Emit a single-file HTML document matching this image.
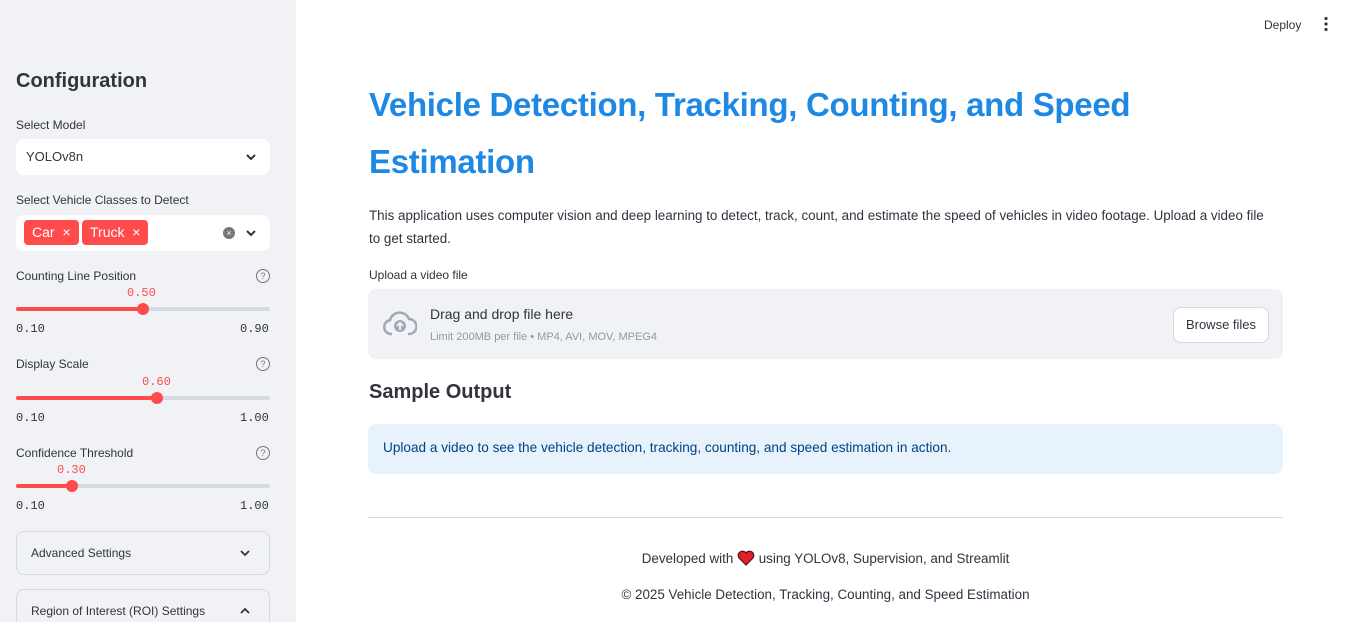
<!DOCTYPE html>
<html><head><meta charset="utf-8"><style>
*{box-sizing:border-box;margin:0;padding:0}
html,body{width:1350px;height:622px;overflow:hidden}
body{font-family:"Liberation Sans",sans-serif;color:#31333f;background:#fff;position:relative}
.sb{position:absolute;left:0;top:0;width:296px;height:622px;background:#f0f2f6;overflow:hidden}
.abs{position:absolute}
.lbl{font-size:12px;color:#31333f}
.box{background:#fff;border-radius:8px}
.mono{font-family:"Liberation Mono",monospace;font-size:12px}
.track{position:absolute;left:16px;width:254px;height:4px;border-radius:2px;background:#d6d9e0}
.fill{position:absolute;left:0;top:0;height:4px;background:#ff4b4b;border-radius:2px}
.knob{position:absolute;top:-4px;width:12px;height:12px;border-radius:50%;background:#ff4b4b}
.q{position:absolute;left:256px;width:14px;height:14px;border:1.3px solid #777;border-radius:50%;font-size:9px;text-align:center;line-height:12px;color:#777}
.tag{position:absolute;background:#ff4b4b;color:#fff;border-radius:4px;height:25px;font-size:14px;line-height:25px;padding:0 8px}
.exp{position:absolute;left:16px;width:254px;border:1px solid #d6d9e0;border-radius:8px;font-size:12px;padding-left:14px}
.chev{position:absolute}
</style></head><body>
<div class="sb">
<div class="abs" style="left:16px;top:70px;font-size:20px;font-weight:bold">Configuration</div>
<div class="abs lbl" style="left:16px;top:118px">Select Model</div>
<div class="abs box" style="left:16px;top:139px;width:254px;height:36px"><span class="abs" style="left:10px;top:10px;font-size:13px">YOLOv8n</span><svg class="chev" style="left:229px;top:13px" width="12" height="10" viewBox="0 0 12 10"><path d="M2 3l4 4 4-4" fill="none" stroke="#31333f" stroke-width="2"/></svg></div>
<div class="abs lbl" style="left:16px;top:193px">Select Vehicle Classes to Detect</div>
<div class="abs box" style="left:16px;top:215px;width:254px;height:36px">
<div class="tag" style="left:8px;top:5px">Car &nbsp;×</div>
<div class="tag" style="left:66px;top:5px">Truck &nbsp;×</div>
<div class="abs" style="left:207px;top:12px;width:12px;height:12px;border-radius:50%;background:#777;color:#fff;font-size:9px;text-align:center;line-height:12px">×</div>
<svg class="chev" style="left:229px;top:13px" width="12" height="10" viewBox="0 0 12 10"><path d="M2 3l4 4 4-4" fill="none" stroke="#31333f" stroke-width="2"/></svg></div>
<div class="abs lbl" style="left:16px;top:269px">Counting Line Position</div><div class="q" style="top:269px">?</div>
<div class="abs mono" style="left:127px;top:286px;color:#ff4b4b">0.50</div>
<div class="track" style="top:307px"><div class="fill" style="width:127px"></div><div class="knob" style="left:121px"></div></div>
<div class="abs mono" style="left:16px;top:322px">0.10</div><div class="abs mono" style="left:240px;top:322px">0.90</div>
<div class="abs lbl" style="left:16px;top:357px">Display Scale</div><div class="q" style="top:357px">?</div>
<div class="abs mono" style="left:142px;top:375px;color:#ff4b4b">0.60</div>
<div class="track" style="top:396px"><div class="fill" style="width:141px"></div><div class="knob" style="left:135px"></div></div>
<div class="abs mono" style="left:16px;top:411px">0.10</div><div class="abs mono" style="left:240px;top:411px">1.00</div>
<div class="abs lbl" style="left:16px;top:446px">Confidence Threshold</div><div class="q" style="top:446px">?</div>
<div class="abs mono" style="left:57px;top:463px;color:#ff4b4b">0.30</div>
<div class="track" style="top:484px"><div class="fill" style="width:56px"></div><div class="knob" style="left:50px"></div></div>
<div class="abs mono" style="left:16px;top:499px">0.10</div><div class="abs mono" style="left:240px;top:499px">1.00</div>
<div class="exp" style="top:531px;height:44px;line-height:42px">Advanced Settings<svg class="chev" style="left:222px;top:16px" width="12" height="10" viewBox="0 0 12 10"><path d="M2 3l4 4 4-4" fill="none" stroke="#31333f" stroke-width="1.8"/></svg></div>
<div class="exp" style="top:589px;height:50px;line-height:42px">Region of Interest (ROI) Settings<svg class="chev" style="left:222px;top:16px" width="12" height="10" viewBox="0 0 12 10"><path d="M2 7l4-4 4 4" fill="none" stroke="#31333f" stroke-width="1.8"/></svg></div>
</div>
<div class="abs" style="left:1264px;top:18px;font-size:12px">Deploy</div>
<svg class="abs" style="left:1322px;top:16px" width="8" height="16" viewBox="0 0 8 16"><circle cx="4" cy="2.5" r="1.6" fill="#31333f"/><circle cx="4" cy="8" r="1.6" fill="#31333f"/><circle cx="4" cy="13.5" r="1.6" fill="#31333f"/></svg>
<div class="abs" style="left:369px;top:76px;width:900px;font-size:33px;font-weight:bold;color:#1e88e5;line-height:57px;letter-spacing:-0.3px">Vehicle Detection, Tracking, Counting, and Speed Estimation</div>
<div class="abs" style="left:369px;top:204px;width:905px;font-size:13.4px;line-height:23px">This application uses computer vision and deep learning to detect, track, count, and estimate the speed of vehicles in video footage. Upload a video file to get started.</div>
<div class="abs lbl" style="left:369px;top:268px">Upload a video file</div>
<div class="abs" style="left:368px;top:289px;width:915px;height:70px;background:#f0f2f6;border-radius:8px">
<svg class="abs" style="left:15px;top:22px" width="34" height="26" viewBox="0 0 34 26"><path d="M9 23H8a7 7 0 0 1-1-13.9A10 10 0 0 1 26 8a7.5 7.5 0 0 1 0 15h-1" fill="none" stroke="#a3a8b8" stroke-width="2.5"/><circle cx="17" cy="15" r="6" fill="#a3a8b8"/><path d="M17 19v-7M14 15l3-3 3 3" stroke="#f0f2f6" stroke-width="1.8" fill="none"/></svg>
<div class="abs" style="left:62px;top:17px;font-size:14px">Drag and drop file here</div>
<div class="abs" style="left:62px;top:42px;font-size:11px;color:#9197a6">Limit 200MB per file • MP4, AVI, MOV, MPEG4</div>
<div class="abs" style="left:805px;top:18px;width:96px;height:36px;background:#fff;border:1px solid #d6d9e0;border-radius:8px;font-size:13px;text-align:center;line-height:34px">Browse files</div>
</div>
<div class="abs" style="left:369px;top:381px;font-size:20px;font-weight:bold">Sample Output</div>
<div class="abs" style="left:368px;top:424px;width:915px;height:50px;background:#e8f2fc;border-radius:8px;color:#004280;font-size:13.6px;padding:16px 15px">Upload a video to see the vehicle detection, tracking, counting, and speed estimation in action.</div>
<div class="abs" style="left:368px;top:517px;width:915px;height:1px;background:#d6d9e0"></div>
<div class="abs" style="left:368px;top:550px;width:915px;text-align:center;font-size:13.4px">Developed with <svg width="18" height="16" viewBox="0 0 18 16" style="vertical-align:-3px"><path d="M9 15L2 8a4 4 0 0 1 7-5 4 4 0 0 1 7 5z" fill="#e0202a" stroke="#5a1010" stroke-width="1.2"/></svg> using YOLOv8, Supervision, and Streamlit</div>
<div class="abs" style="left:368px;top:587px;width:915px;text-align:center;font-size:13.4px">© 2025 Vehicle Detection, Tracking, Counting, and Speed Estimation</div>
</body></html>
